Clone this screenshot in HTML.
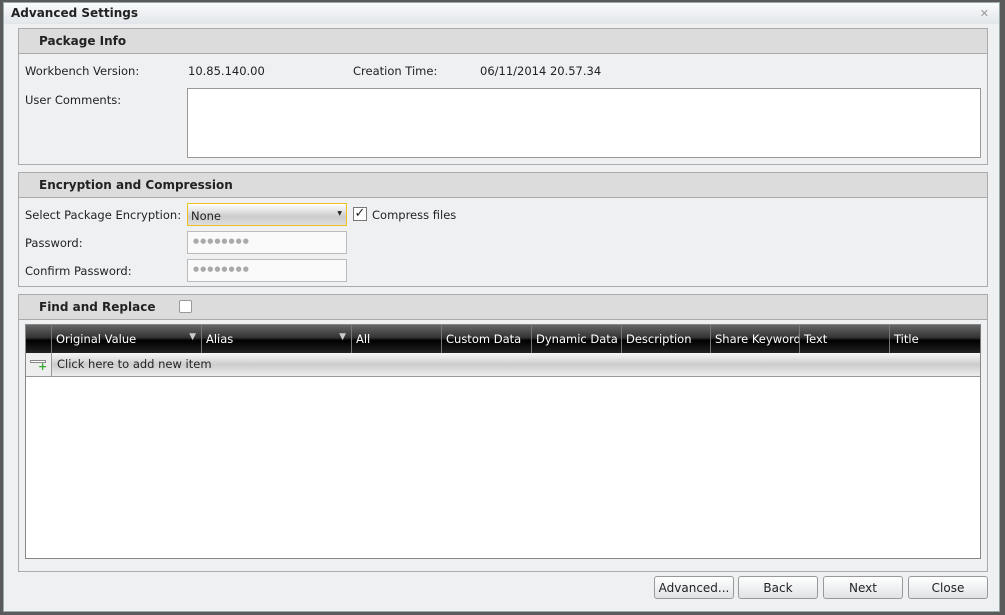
<!DOCTYPE html>
<html><head><style>
*{box-sizing:border-box;margin:0;padding:0}
body{width:1005px;height:615px;background:#5a5a5a;font-family:"DejaVu Sans","Liberation Sans",sans-serif;font-size:11.5px;color:#222;position:relative;overflow:hidden}
.dlg{position:absolute;left:3px;top:2px;width:997px;height:610px;background:#eef0f2;border:1px solid #9aa}
.title{position:absolute;left:0;top:0;width:100%;height:21px;background:linear-gradient(#fafbfc,#e2e6ea);font-weight:bold;font-size:12px;padding:3px 7px}
.x{position:absolute;right:10px;top:4px;color:#999;font-size:11px}
.panel{position:absolute;left:14px;width:970px;border:1px solid #aaa;background:#eef0f2}
.ph{height:25px;background:#dcdcdc;border-bottom:1px solid #aaa;font-weight:bold;font-size:12px;padding:5px 20px}
.t{position:absolute;white-space:nowrap}
.inp{position:absolute;border:1px solid #bbb;background:#fafafa}
.grid{position:absolute;left:6px;top:29px;width:956px;height:235px;border:1px solid #888;background:#fff}
.gh{position:absolute;left:0;top:0;height:28px;background:linear-gradient(#666 0%,#333 45%,#000 55%,#222 100%);border-right:1px solid #777;color:#fff;padding:7px 4px;white-space:nowrap;overflow:hidden}
.btn{position:absolute;top:573px;width:80px;height:23px;border:1px solid #999;border-radius:3px;background:linear-gradient(#fff,#e0e3e6);text-align:center;padding-top:4px;font-size:12px}
.dots{color:#aaa;padding:5px 5px;font-size:7px;letter-spacing:1px}
</style></head><body>
<div class="dlg">
<div class="title">Advanced Settings<span class="x">✕</span></div>
<div class="panel" style="top:25px;height:137px">
<div class="ph">Package Info</div>
<div class="t" style="left:6px;top:35px">Workbench Version:</div>
<div class="t" style="left:169px;top:35px">10.85.140.00</div>
<div class="t" style="left:334px;top:35px">Creation Time:</div>
<div class="t" style="left:461px;top:35px">06/11/2014 20.57.34</div>
<div class="t" style="left:6px;top:64px">User Comments:</div>
<div class="inp" style="left:168px;top:59px;width:794px;height:70px;background:#fff;border-color:#999"></div>
</div>
<div class="panel" style="top:169px;height:115px">
<div class="ph">Encryption and Compression</div>
<div class="t" style="left:6px;top:35px">Select Package Encryption:</div>
<div class="inp" style="left:168px;top:30px;width:160px;height:23px;border-color:#f0c020;background:linear-gradient(#fff,#ccc 60%,#ddd);padding:5px 3px">None<span style="position:absolute;right:4px;top:6px;font-size:6px">▼</span></div>
<div class="inp" style="left:334px;top:34px;width:14px;height:14px;background:#fff;border-color:#777;font-size:13px;line-height:12px;text-align:center">✓</div>
<div class="t" style="left:353px;top:35px">Compress files</div>
<div class="t" style="left:6px;top:63px">Password:</div>
<div class="inp dots" style="left:168px;top:58px;width:160px;height:23px">●●●●●●●●</div>
<div class="t" style="left:6px;top:91px">Confirm Password:</div>
<div class="inp dots" style="left:168px;top:86px;width:160px;height:23px">●●●●●●●●</div>
</div>
<div class="panel" style="top:291px;height:278px">
<div class="ph">Find and Replace<span style="display:inline-block;width:13px;height:13px;border:1px solid #999;background:#fff;border-radius:2px;margin-left:24px;vertical-align:-2px"></span></div>
<div class="grid">
<div class="gh" style="left:0;width:26px"></div>
<div class="gh" style="left:26px;width:150px">Original Value<span style="position:absolute;right:5px;color:#ccc;font-size:9px">▼</span></div>
<div class="gh" style="left:176px;width:150px">Alias<span style="position:absolute;right:5px;color:#ccc;font-size:9px">▼</span></div>
<div class="gh" style="left:326px;width:90px">All</div>
<div class="gh" style="left:416px;width:90px">Custom Data</div>
<div class="gh" style="left:506px;width:90px">Dynamic Data</div>
<div class="gh" style="left:596px;width:89px">Description</div>
<div class="gh" style="left:685px;width:89px">Share Keyword</div>
<div class="gh" style="left:774px;width:90px">Text</div>
<div class="gh" style="left:864px;width:91px">Title</div>
<div style="position:absolute;left:0;top:28px;width:26px;height:24px;background:#eee;border-right:1px solid #999;border-bottom:1px solid #999"><div style="position:absolute;left:4px;top:7px;width:16px;height:3px;border:1px solid #888;background:#fff"></div><span style="position:absolute;left:12px;top:7px;color:#3a3;font-weight:bold;font-size:11px">+</span></div>
<div style="position:absolute;left:26px;top:28px;width:928px;height:24px;background:linear-gradient(#f8f8f8,#ccc 50%,#eee);border-bottom:1px solid #999;padding:4px 5px">Click here to add new item</div>
</div>
</div>
<div class="btn" style="left:650px">Advanced...</div>
<div class="btn" style="left:734px">Back</div>
<div class="btn" style="left:819px">Next</div>
<div class="btn" style="left:904px">Close</div>
</div>
</body></html>
